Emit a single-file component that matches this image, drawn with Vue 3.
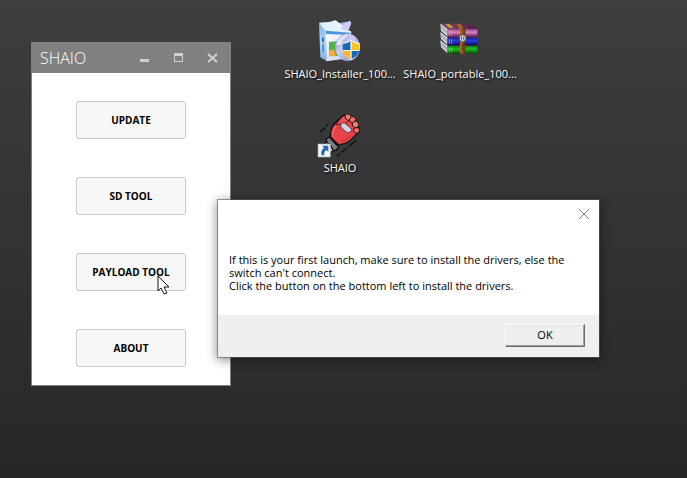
<script setup>
const shortcuts = [
  { id: 'installer', label: 'SHAIO_Installer_100...' },
  { id: 'archive', label: 'SHAIO_portable_100...' },
  { id: 'app', label: 'SHAIO' },
]
const tools = ['UPDATE', 'SD TOOL', 'PAYLOAD TOOL', 'ABOUT']
const volumes = [
  { id: 'a', fill: 'url(#volPink)', y: 58 },
  { id: 'b', fill: 'url(#volBlue)', y: 83 },
  { id: 'c', fill: 'url(#volGreen)', y: 108 },
]
</script>

<template>
  <main class="desktop">
    <ul class="shortcuts">
      <li v-for="item in shortcuts" :key="item.id" class="shortcut">
        <svg v-if="item.id === 'installer'" class="picture" viewBox="18 21 144 144" aria-hidden="true">
          <defs>
            <linearGradient id="boxFront" x1="0" y1="0" x2="1" y2="1">
              <stop offset="0" stop-color="#fff" /><stop offset="1" stop-color="#c3cff0" />
            </linearGradient>
            <linearGradient id="boxSide" x1="0" y1="0" x2="0" y2="1">
              <stop offset="0" stop-color="#6fb4ea" /><stop offset=".5" stop-color="#b5d8f6" /><stop offset="1" stop-color="#7caee0" />
            </linearGradient>
            <linearGradient id="disc" x1="0" y1="0" x2="1" y2="1">
              <stop offset="0" stop-color="#8a8ccb" /><stop offset=".4" stop-color="#c9ccf2" /><stop offset="1" stop-color="#8388c4" />
            </linearGradient>
          </defs>
          <path d="M28 39 70 34 81 40 122 34 116 65 45 62Z" fill="#8fb6e6" />
          <path d="M64 34 77 31 99 48 94 58 69 56Z" fill="#f3f2ff" />
          <path d="M97 42 120 33 124 40 113 66 94 60Z" fill="#cfcdf2" />
          <path d="M27 38 48 60 51 154 31 142Z" fill="url(#boxSide)" />
          <path d="M47 59 124 66 115 145 50 154Z" fill="url(#boxFront)" />
          <path d="M27 38 66 36 93 57 124 64 119 73 48 65Z" fill="#e2f1fd" />
          <path d="M48 62 121 68 120 75 48 72Z" fill="#4f97d4" />
          <path d="M36 80 42 84 42 99 36 95Z" fill="#1d7fd1" />
          <path d="M36 101 42 105 42 127 36 123Z" fill="#4896df" />
          <path d="M57 96 81 94 84 138 57 139Z" fill="#51b34d" />
          <path d="M57 122 72 118 78 138 57 139Z" fill="#f4ad3d" />
          <ellipse cx="113" cy="112" rx="37" ry="41" fill="url(#disc)" />
          <path d="M79 104Q84 80 106 74L121 73Q97 84 92 106Z" fill="#f2f2ff" opacity=".8" />
          <path d="M123 89Q136 97 149 99Q154 137 123 151Q93 136 97 99Q111 98 123 89Z" fill="#edf4fb" />
          <path d="M121 94V120H98V102Q111 102 121 94Z" fill="#1768b3" />
          <path d="M125 94Q136 102 148 103V120H125Z" fill="#ffc51e" />
          <path d="M98 123H121V147Q102 138 98 123Z" fill="#ffb817" />
          <path d="M125 123H148Q144 138 125 147Z" fill="#1769bc" />
        </svg>

        <svg v-else-if="item.id === 'archive'" class="picture" viewBox="18 21 144 144" aria-hidden="true">
          <defs>
            <linearGradient id="volPink" x1="0" y1="0" x2="0" y2="1">
              <stop offset="0" stop-color="#a34f91" /><stop offset=".4" stop-color="#d67fc0" /><stop offset="1" stop-color="#5f1752" />
            </linearGradient>
            <linearGradient id="volBlue" x1="0" y1="0" x2="0" y2="1">
              <stop offset="0" stop-color="#1717a0" /><stop offset=".4" stop-color="#2a3de6" /><stop offset="1" stop-color="#080856" />
            </linearGradient>
            <linearGradient id="volGreen" x1="0" y1="0" x2="0" y2="1">
              <stop offset="0" stop-color="#078410" /><stop offset=".4" stop-color="#1fc026" /><stop offset="1" stop-color="#044908" />
            </linearGradient>
            <linearGradient id="cover" x1="0" y1="0" x2="1" y2="0">
              <stop offset="0" stop-color="#8c4678" /><stop offset="1" stop-color="#45203b" />
            </linearGradient>
            <linearGradient id="strap" x1="0" y1="0" x2="1" y2="0">
              <stop offset="0" stop-color="#6b3a14" /><stop offset=".5" stop-color="#b06a32" /><stop offset="1" stop-color="#5c3010" />
            </linearGradient>
          </defs>
          <path d="M31 41 120 41 142 59 53 59Z" fill="url(#cover)" />
          <g v-for="volume in volumes" :key="volume.id">
            <path :d="`M31 ${volume.y - 17} L53 ${volume.y} V${volume.y + 22} L33 ${volume.y + 4}Z`" fill="#dcdde2" />
            <path :d="`M34 ${volume.y - 9} L53 ${volume.y + 8} M34 ${volume.y - 3} L53 ${volume.y + 14}`" stroke="#858b98" stroke-width="3" />
            <rect x="52" :y="volume.y" width="90" height="23" rx="3" :fill="volume.fill" />
            <path :d="`M58 ${volume.y + 5} V${volume.y + 19} M65 ${volume.y + 5} V${volume.y + 19}`" stroke="#d8c33c" stroke-width="3" stroke-dasharray="4 2" />
          </g>
          <path d="M46 43H58L71 53H59Z" fill="#c2b51e" />
          <path d="M75 41H90L106 58V131H90V59Z" fill="url(#strap)" />
          <path d="M88 78Q98 71 108 78V91Q98 98 88 91Z" fill="#c9c9c4" stroke="#44443e" stroke-width="2" />
          <path d="M93 80H103V89H93Z" fill="#68543d" />
          <path d="M98 78V94" stroke="#f1f1e9" stroke-width="3" />
          <path d="M98 101V104M98 108V111M98 115V118" stroke="#2c1a0d" stroke-width="3" />
        </svg>

        <svg v-else class="picture" viewBox="18 18 144 144" aria-hidden="true">
          <g stroke="#101012" stroke-width="4" stroke-linejoin="round" stroke-linecap="round">
            <path d="M31 80 44 69M49 62 54 58M82 153 89 147M96 141 109 130M117 124 139 106" fill="none" />
            <path d="M42 119 58 104 76 132 61 144Z" fill="#f6b28d" />
            <path d="M49 102 58 96 86 126 77 137 69 135 63 123 50 112Z" fill="#777b88" />
            <path d="M61 96Q61 70 73 57L96 34Q103 27 110 34L145 67Q153 75 144 84L132 95Q112 119 85 119Z" fill="#e94349" />
            <path d="M78 58 96 36Q104 27 112 35L119 44 105 55Z" fill="#f04f53" stroke-width="2" />
            <path d="M106 37Q103 26 113 27Q123 27 125 37Q125 46 115 46Q107 46 106 37Z" fill="#f07d74" stroke-width="3" />
            <path d="M119 42Q123 31 134 36Q142 42 136 50Q128 59 120 50Z" fill="#ec6b68" stroke-width="3" />
            <path d="M128 54Q134 44 143 51Q151 59 143 66Q133 73 128 62Z" fill="#f07d74" stroke-width="3" />
            <path d="M131 71Q140 63 148 70Q152 79 144 84Q134 87 131 78Z" fill="#ec6b68" stroke-width="3" />
            <path d="M93 57Q97 51 104 54L122 69Q127 74 123 79L119 82Q113 85 107 80L94 68Q90 63 93 57Z" fill="#d0d4e2" stroke="#6d3540" stroke-width="3" />
          </g>
          <path d="M68 91Q68 74 78 64" fill="none" stroke="#f8666a" stroke-width="4" />
          <path d="M92 108Q111 106 122 91" fill="none" stroke="#c9343c" stroke-width="4" />
          <path d="M24 117H61V156H24Z" fill="#f5f7f9" stroke="#a4b1bb" stroke-width="2" />
          <path d="M36 122H55V141L49 135Q41 141 43 151H35Q30 138 42 128Z" fill="#256bae" />
        </svg>
        <span class="caption">{{ item.label }}</span>
      </li>
    </ul>

    <section class="launcher" aria-labelledby="launcher-title">
      <header class="titlebar">
        <h1 id="launcher-title">SHAIO</h1>
        <button type="button" class="control" aria-label="Minimize">
          <svg viewBox="0 0 12 12"><path d="M1 7H10V10H1Z" fill="#d0d0d0" /></svg>
        </button>
        <button type="button" class="control" aria-label="Maximize">
          <svg viewBox="0 0 12 12"><path d="M1 1H10V10H1ZM2 4V9H9V4Z" fill="#d0d0d0" fill-rule="evenodd" /></svg>
        </button>
        <button type="button" class="control" aria-label="Close">
          <svg viewBox="0 0 12 12"><path d="M1 2 10 10M10 2 1 10" stroke="#d0d0d0" stroke-width="2" /></svg>
        </button>
      </header>
      <nav class="tools">
        <button v-for="tool in tools" :key="tool" type="button" class="tool">{{ tool }}</button>
      </nav>
    </section>

    <section class="dialog" role="dialog" aria-describedby="dialog-message">
      <div class="dialog-body">
        <button type="button" class="dismiss" aria-label="Close">
          <svg viewBox="0 0 12 12"><path d="M1 1 11 11M11 1 1 11" stroke="#858585" /></svg>
        </button>
        <p id="dialog-message">If this is your first launch, make sure to install the drivers, else the<br>switch can't connect.<br>Click the button on the bottom left to install the drivers.</p>
      </div>
      <footer class="dialog-footer">
        <button type="button" class="ok">OK</button>
      </footer>
    </section>

    <svg class="pointer" viewBox="0 0 13 20" aria-hidden="true">
      <path d="M1 1V16L4 13 7 19 10 18 7 12H12Z" fill="#fff" stroke="#15151d" />
    </svg>
  </main>
</template>

<style>
body {
  margin: 0;
  background: #272727;
}
</style>

<style scoped>
.desktop {
  position: relative;
  box-sizing: border-box;
  min-height: 100vh;
  overflow: hidden;
  padding: 17px 0 0 280px;
  background: linear-gradient(#3e3e3e, #272727);
  font-family: "Open Sans", "Noto Sans", sans-serif;
}
button {
  box-sizing: border-box;
  padding: 0;
  font-family: inherit;
  color: #000;
}
.shortcuts {
  display: grid;
  grid-template-columns: repeat(2, 120px);
  row-gap: 28px;
  margin: 0;
  padding: 0;
  list-style: none;
}
.shortcut {
  display: flex;
  flex-direction: column;
  align-items: center;
}
.picture {
  width: 48px;
  height: 48px;
}
.caption {
  font-size: 11px;
  line-height: 18px;
  white-space: nowrap;
  color: #fff;
  text-shadow: 1px 1px 2px #000;
}
.launcher {
  position: absolute;
  left: 31px;
  top: 42px;
  box-sizing: border-box;
  width: 200px;
  border: 1px solid #808080;
  background: #fff;
}
.titlebar {
  display: flex;
  align-items: center;
  gap: 10px;
  height: 30px;
  padding: 0 5px 0 8px;
  background: #808080;
}
h1 {
  flex: 1;
  margin: 0;
  font-size: 16px;
  font-weight: 300;
  line-height: 30px;
  color: #fff;
}
.control {
  display: grid;
  place-items: center;
  width: 24px;
  height: 24px;
  border: 0;
  background: none;
}
.control svg,
.dismiss svg {
  display: block;
  width: 12px;
  height: 12px;
}
.tools {
  display: flex;
  flex-direction: column;
  align-items: center;
  gap: 38px;
  padding: 28px 0 18px;
}
.tool {
  width: 110px;
  height: 38px;
  border: 1px solid #ccc;
  border-radius: 3px;
  background: #f7f7f7;
  font-size: 10px;
  font-weight: 700;
}
.dialog {
  position: absolute;
  left: 217px;
  top: 199px;
  width: 381px;
  border: 1px solid rgba(90, 90, 90, 0.6);
  background: #fff;
  background-clip: padding-box;
  box-shadow: 0 2px 10px rgba(0, 0, 0, 0.45);
}
.dialog-body {
  display: flex;
  flex-direction: column;
  padding: 6px 7px 23px 11px;
}
.dismiss {
  display: grid;
  place-items: center;
  align-self: flex-end;
  width: 16px;
  height: 16px;
  border: 0;
  background: none;
}
p {
  margin: 31px 0 0;
  font-size: 11px;
  line-height: 13px;
  white-space: nowrap;
  color: #000;
}
.dialog-footer {
  display: flex;
  justify-content: flex-end;
  padding: 9px 14px 10px;
  background: #efefef;
}
.ok {
  width: 80px;
  height: 23px;
  padding-bottom: 2px;
  border: 1px solid;
  border-color: #fff #696969 #696969 #fff;
  background: #efefef;
  box-shadow: inset -1px -1px #a0a0a0, inset 1px 1px #e3e3e3;
  font-size: 11px;
}
.pointer {
  position: absolute;
  left: 157px;
  top: 275px;
  width: 13px;
  height: 20px;
}
</style>
